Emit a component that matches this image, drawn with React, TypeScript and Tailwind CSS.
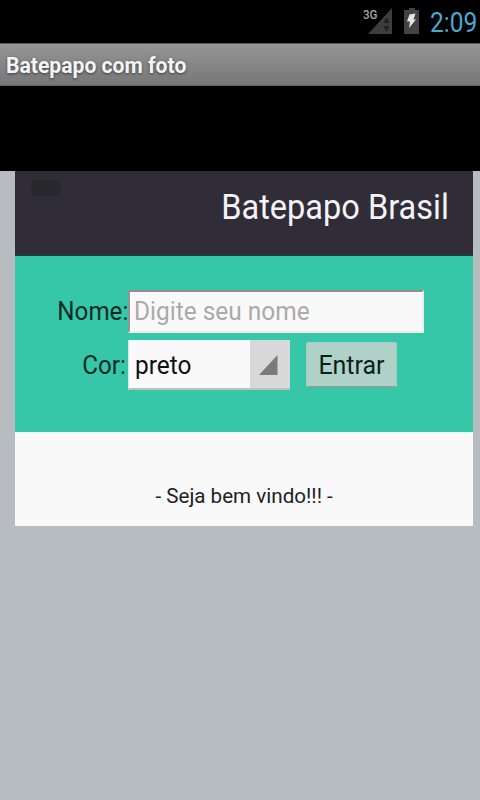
/** Signal and battery glyphs of the status bar */
function StatusIcons() {
  return (
    <svg width="62" height="42" viewBox="0 0 62 42" className="shrink-0">
      <path d="M31 8V34H7Z" fill="#3d3d3d" />
      <path d="M25.500 17l3 6h-6zM25.500 32l3-6h-6z" fill="#202020" />
      <text
        x="2"
        y="18.500"
        fontSize="13"
        fontWeight="500"
        textLength="14.500"
        lengthAdjust="spacingAndGlyphs"
        fill="#a4a4a4"
        className="font-['Roboto']"
      >
        3G
      </text>
      <path d="M48 8h6v2h4v24H43V10h5z" fill="#434343" />
      <path d="M48.500 14.500l6-1-2 6h2.500l-7 8.500 1-6.500h-3z" fill="#e6e6e6" />
    </svg>
  );
}

function StatusBar() {
  return (
    <div className="flex h-[43px] items-start bg-black pl-[361px]">
      <StatusIcons />
      <span className="ml-[7px] mt-[7px] inline-block origin-left scale-x-[0.91] text-[27px] leading-[32px] text-[#4aa9cf]">
        2:09
      </span>
    </div>
  );
}

function TitleBar() {
  return (
    <div className="flex h-[43px] items-center border-b border-t border-b-[#626262] border-t-[#5a5a5a] bg-gradient-to-b from-[#959595] to-[#777777] pl-[6px] pt-[2px]">
      <span className="inline-block origin-left scale-x-[0.96] whitespace-nowrap text-[22px] font-bold leading-[26px] text-[#f4f4f4] [text-shadow:0_1px_3px_rgba(0,0,0,0.55)]">
        Batepapo com foto
      </span>
    </div>
  );
}

function LoginForm() {
  return (
    <form className="h-[176px] bg-[#36c7a9] pt-[34px] text-[26px] leading-[30px] text-[#0b2a25]">
      <div className="flex h-[43px] items-center">
        <div className="flex w-[113px] justify-end pb-[2px]">
          <span className="inline-block origin-right scale-x-[0.93]">Nome:</span>
        </div>
        <div className="flex h-[43px] w-[296px] items-center overflow-hidden border-2 border-b-[#e9eeec] border-l-[#8f9694] border-r-[#e9eeec] border-t-[#8f9090] bg-[#f9f9f9] pb-[2px] pl-[4px]">
          <span className="inline-block origin-left scale-x-[0.94] whitespace-nowrap text-[#aaaaaa]">
            Digite seu nome
          </span>
        </div>
      </div>
      <div className="mt-[7px] flex h-[50px] items-center">
        <div className="flex w-[113px] justify-end pr-[2px]">
          <span className="inline-block origin-right scale-x-[0.93]">Cor:</span>
        </div>
        <div className="flex h-[50px] w-[162px] border-b-2 border-l border-b-[#b9c4c0] border-l-[#d8e6e2] bg-[#f9f9f9]">
          <span className="flex flex-1 items-center pl-[6px] pt-[2px] text-[#111111]">
            <span className="inline-block origin-left scale-x-[0.94]">preto</span>
          </span>
          <span className="flex w-[40px] items-center bg-[#d8d8d8] pl-[9px] pt-[1px]">
            <svg width="19" height="20" viewBox="0 0 19 20">
              <path d="M18.500 0V20H0Z" fill="#7b7b7b" />
            </svg>
          </span>
        </div>
        <button
          type="button"
          className="ml-[16px] flex h-[46px] w-[91px] items-center justify-center rounded-[2px] border border-b-2 border-[#a2cfc3] border-b-[#80a59b] bg-[#b0d1c8] pt-[1px] text-[#0b1f1b]"
        >
          <span className="inline-block scale-x-[0.96]">Entrar</span>
        </button>
      </div>
    </form>
  );
}

export default function App() {
  return (
    <div className="flex h-[800px] w-[480px] flex-col overflow-hidden bg-[#b7bcc0] font-['Roboto','Noto_Sans',sans-serif]">
      <StatusBar />
      <TitleBar />
      <div className="h-[85px] bg-black" />
      <main className="ml-[15px] w-[458px]">
        <header className="flex h-[85px] items-start justify-between border-b-2 border-[#263a3d] bg-[#302d38] pl-[16px] pr-[24px]">
          <div className="mt-[9px] h-[16px] w-[30px] bg-[#28292d]" />
          <h1 className="mt-[16px] inline-block origin-right scale-x-[0.93] whitespace-nowrap text-[35px] leading-[42px] text-[#f4f3f6]">
            Batepapo Brasil
          </h1>
        </header>
        <LoginForm />
        <section className="flex h-[94px] justify-center border-t-2 border-[#ecfaf6] bg-[#f9f9f9] pt-[50px] text-[20px] leading-[24px] text-[#222222]">
          <span className="inline-block scale-x-[1.03] whitespace-nowrap">- Seja bem vindo!!! -</span>
        </section>
      </main>
    </div>
  );
}
